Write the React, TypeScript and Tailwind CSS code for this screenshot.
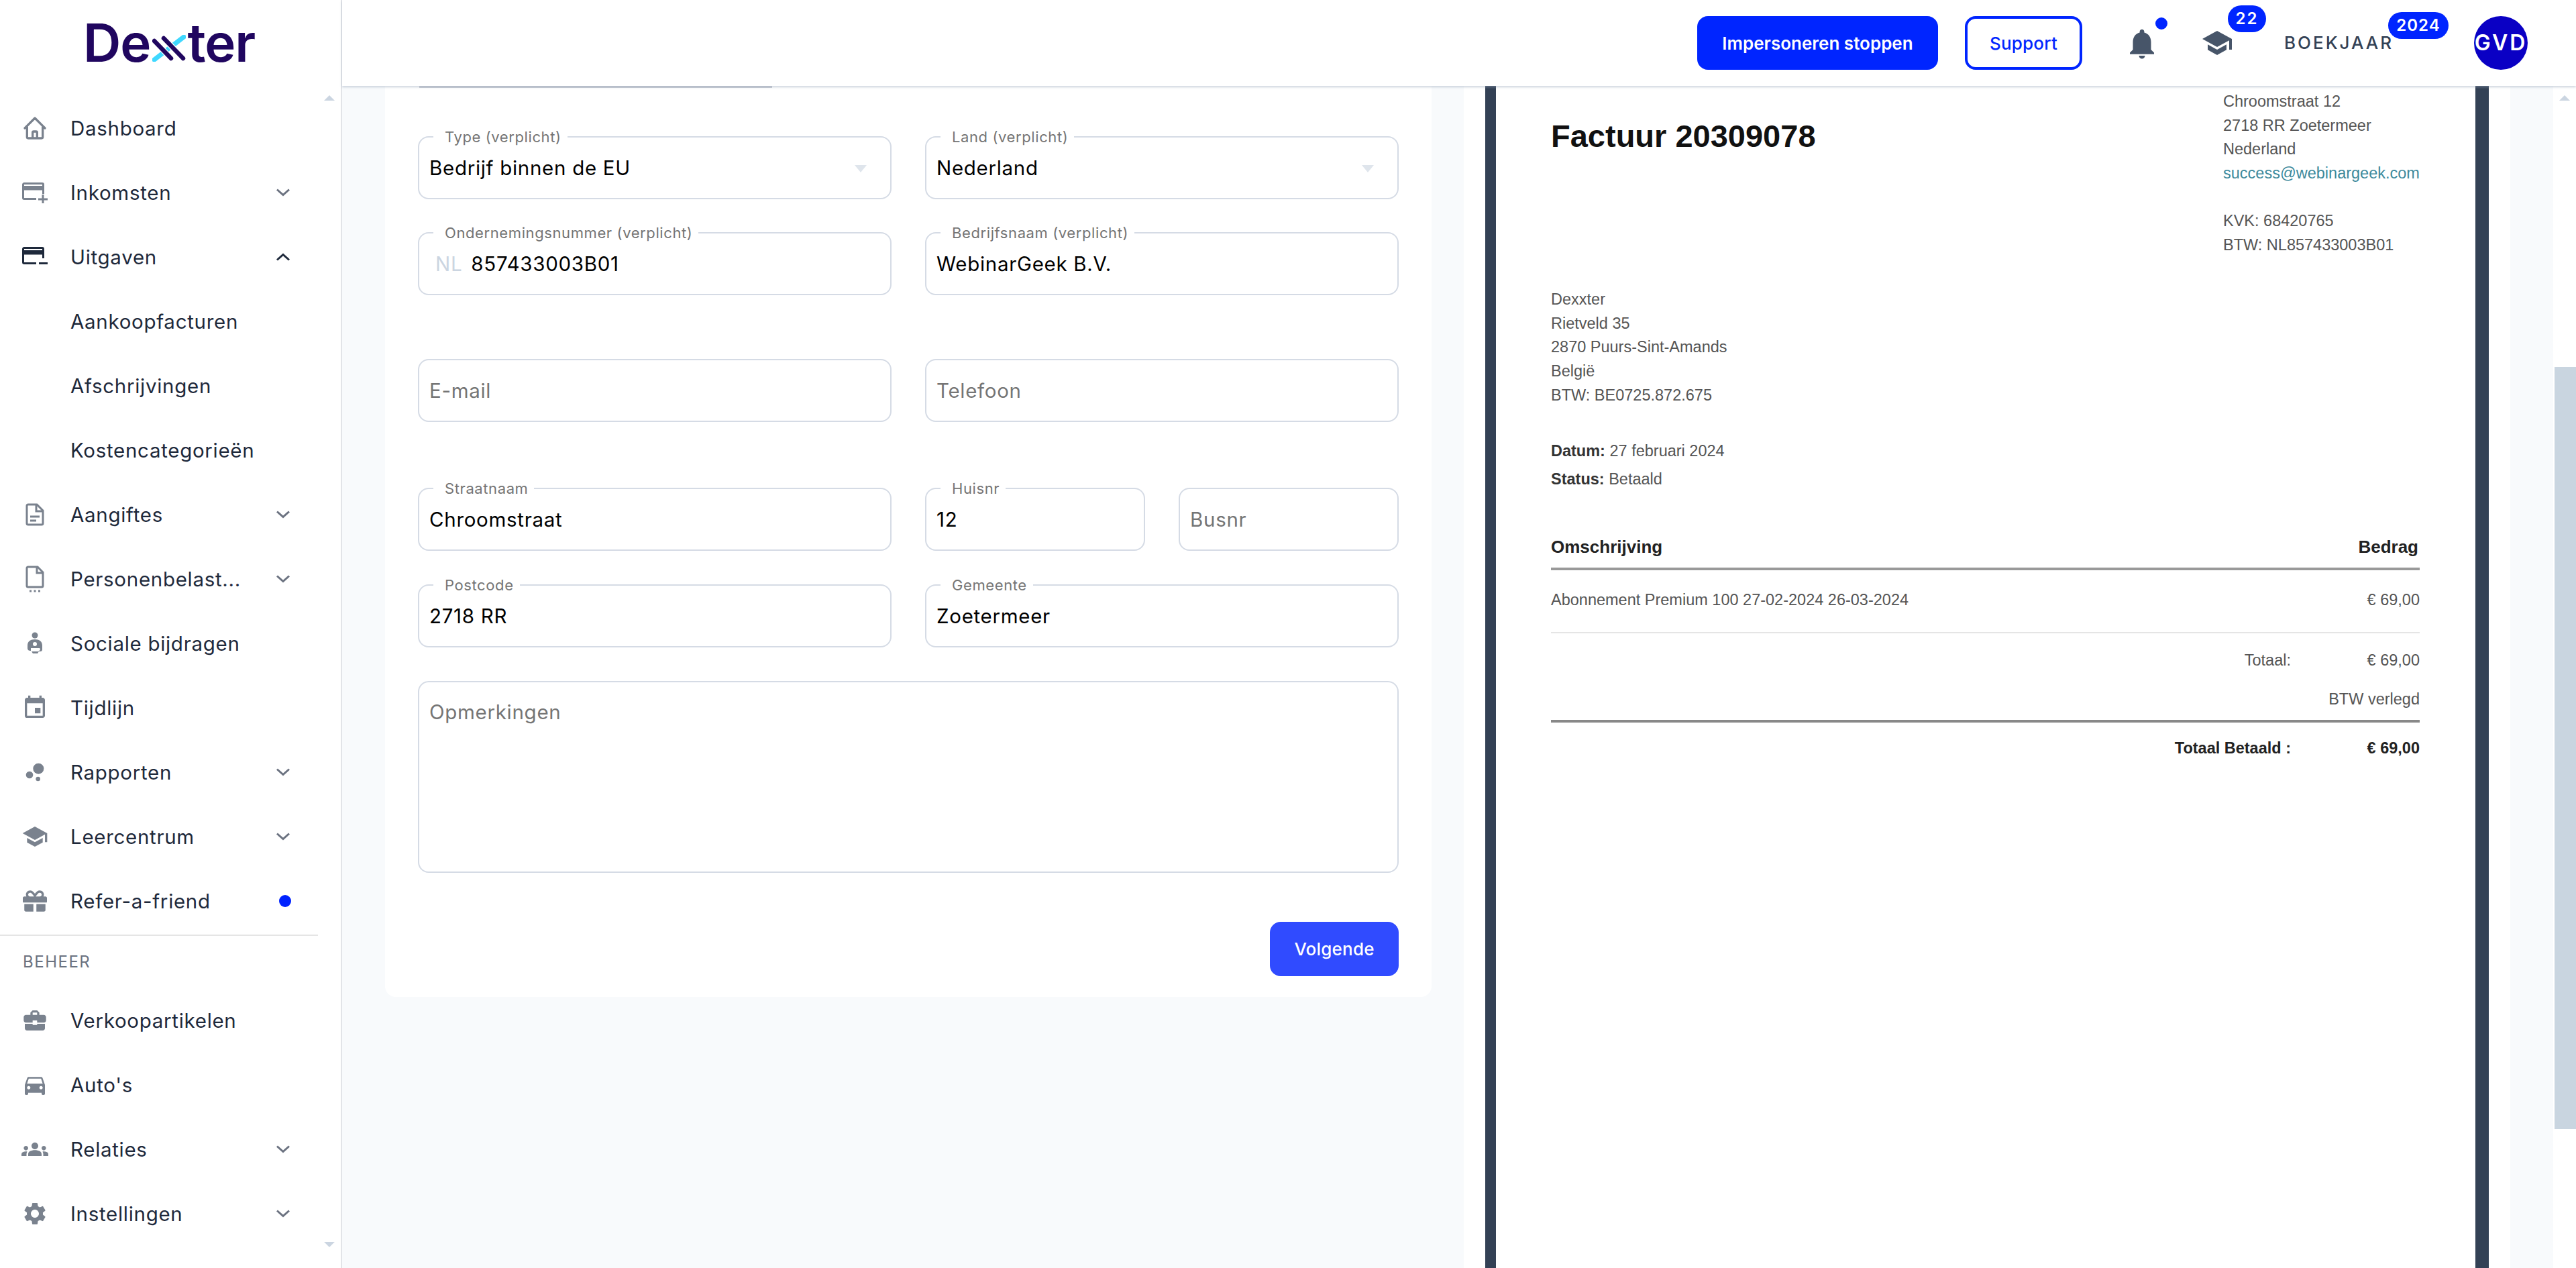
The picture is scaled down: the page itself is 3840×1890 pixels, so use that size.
import React from "react";
import { FaGift } from "react-icons/fa";
import { HiOutlineHome } from "react-icons/hi";
import { MdEvent, MdBubbleChart, MdBusinessCenter, MdDirectionsCar, MdGroups, MdSettings, MdSchool, MdNotifications } from "react-icons/md";

const CardIcon = ({ minus }: { minus?: boolean }) => (
  <svg width="38" height="31" viewBox="0 0 38 31" fill="none" stroke="currentColor">
    <path d="M21 24.500H3A1.500 1.500 0 0 1 1.500 23V3A1.500 1.500 0 0 1 3 1.500h27A1.500 1.500 0 0 1 31.500 3V17" strokeWidth="3" />
    <path d="M1.500 5.500h30v5.500h-30z" fill="currentColor" strokeWidth="1" />
    {minus ? <path d="M25 24.500h13" strokeWidth="3" /> : <path d="M24 25h14M31 18v13" strokeWidth="3" />}
  </svg>
);
const Doc = () => (
  <svg width="28" height="34" viewBox="0 0 28 34" fill="none" stroke="currentColor" strokeWidth="3">
    <path d="M17 2H4a2 2 0 0 0-2 2v26a2 2 0 0 0 2 2h20a2 2 0 0 0 2-2V11z" />
    <path d="M16 2v10h10M7 20h14M7 26h9" />
  </svg>
);
const DocDots = () => (
  <svg width="28" height="40" viewBox="0 0 28 40" fill="none" stroke="currentColor" strokeWidth="3">
    <path d="M18 2H4a2 2 0 0 0-2 2v26a2 2 0 0 0 2 2h20a2 2 0 0 0 2-2V10z" />
    <path d="M17 2v9h9" />
    <path d="M6 38h3M12.500 38h3M19 38h3" />
  </svg>
);
const Person = () => (
  <svg width="24" height="34" viewBox="0 0 24 34" fill="currentColor">
    <circle cx="12" cy="5" r="4.500" />
    <path fillRule="evenodd" d="M12 11c6.500 0 11 3 11 9v6c0 2-1 3-3 3h-3c1.500-1 3-2 3-3.500 0-1-1-1.500-2-1.500H6v4c-3 0-5-1-5-4v-4c0-6 4.500-9 11-9zm0 4a3 3 0 1 0 0 6 3 3 0 0 0 0-6z" />
    <path d="M7 29h11l-2 3H9z" />
  </svg>
);
const Chevron = ({ up }: { up?: boolean }) => (
  <svg width="20" height="12" viewBox="0 0 20 12" fill="none" stroke="currentColor" strokeWidth="3">
    <path d={up ? "M1 10.500l9-8 9 8" : "M1 1.500l9 8 9-8"} />
  </svg>
);

type Item = { label: string; icon?: React.ReactNode; chev?: boolean; up?: boolean; dark?: boolean; dot?: boolean };
const top: Item[] = [
  { label: "Dashboard", icon: <HiOutlineHome size={40} /> },
  { label: "Inkomsten", icon: <CardIcon />, chev: true },
  { label: "Uitgaven", icon: <CardIcon minus />, chev: true, up: true, dark: true },
  { label: "Aankoopfacturen" },
  { label: "Afschrijvingen" },
  { label: "Kostencategorieën" },
  { label: "Aangiftes", icon: <Doc />, chev: true },
  { label: "Personenbelast...", icon: <DocDots />, chev: true },
  { label: "Sociale bijdragen", icon: <Person /> },
  { label: "Tijdlijn", icon: <MdEvent size={40} /> },
  { label: "Rapporten", icon: <MdBubbleChart size={40} />, chev: true },
  { label: "Leercentrum", icon: <MdSchool size={40} />, chev: true },
  { label: "Refer-a-friend", icon: <FaGift size={36} />, dot: true },
];
const bottom: Item[] = [
  { label: "Verkoopartikelen", icon: <MdBusinessCenter size={40} /> },
  { label: "Auto's", icon: <MdDirectionsCar size={40} /> },
  { label: "Relaties", icon: <MdGroups size={40} />, chev: true },
  { label: "Instellingen", icon: <MdSettings size={40} />, chev: true },
];

const NavRow = ({ item }: { item: Item }) => (
  <div className="flex h-[96px] items-center pr-[76px]">
    <div className={`ml-[32px] flex w-[40px] justify-center ${item.dark ? "text-[#1e293b]" : "text-[#7a828e]"}`}>{item.icon}</div>
    <span className="ml-[33px] text-[29.5px] tracking-[0.7px] text-[#1e293b]">{item.label}</span>
    {item.chev && (
      <span className={`ml-auto ${item.dark ? "text-[#1e293b]" : "text-[#6b7280]"}`}>
        <Chevron up={item.up} />
      </span>
    )}
    {item.dot && <span className="ml-auto -mr-[2px] h-[18px] w-[18px] rounded-full bg-[#0022ff]" />}
  </div>
);

const Field = ({
  label,
  value,
  placeholder,
  className = "",
  prefix,
  select,
}: {
  label?: string;
  value?: string;
  placeholder?: string;
  className?: string;
  prefix?: string;
  select?: boolean;
}) => (
  <div className={`relative flex h-[94px] items-center rounded-[16px] border-2 border-[#d5dbe5] px-[15px] text-[29.5px] tracking-[0.7px] ${className}`}>
    {label && (
      <span className="absolute -top-[14px] left-[21px] bg-white pl-[17px] pr-[9px] text-[22px] leading-[26px] tracking-[0.6px] text-[#757575]">
        {label}
      </span>
    )}
    {prefix && <span className="ml-[9px] mr-[13px] text-[#cbd5e1]">{prefix}</span>}
    {value && <span className="text-black">{value}</span>}
    {placeholder && <span className="text-[#757575]">{placeholder}</span>}
    {select && <span className="ml-auto mr-[20px] mt-[2px] h-0 w-0 border-x-[9px] border-t-[11px] border-x-transparent border-t-[#dfe5ec]" />}
  </div>
);

const Small = ({ children, className = "" }: { children: React.ReactNode; className?: string }) => (
  <div className={`h-[35.6px] leading-[35.6px] ${className}`}>{children}</div>
);

const Total = ({ label, amount, className = "" }: { label: string; amount: string; className?: string }) => (
  <div className={`flex justify-end ${className}`}>
    <Small>{label}</Small>
    <Small className="w-[192px] text-right">{amount}</Small>
  </div>
);

export default function App() {
  return (
    <div className="flex h-[1890px] w-[3840px] overflow-hidden bg-[#f8fafc] font-['Inter',sans-serif]">
      <aside className="relative h-full w-[510px] shrink-0 border-r-2 border-[#e2e4e8] bg-white">
        <div className="flex h-[128px] items-center pl-[124px] text-[#20065f]">
          <div className="flex items-baseline">
            <span className="text-[78px] font-semibold leading-none tracking-[-1px]">De</span>
            <svg width="50" height="40" viewBox="0 0 50 40" className="ml-[3px] mr-[2px]">
              <path d="M3 37L47 3" stroke="#3fd8ff" strokeWidth="7" strokeLinecap="round" />
              <path d="M3 9l25 26M17 5l29 30" stroke="#fff" strokeWidth="9" strokeLinecap="round" />
              <path d="M3 9l25 26M17 5l29 30" stroke="#20065f" strokeWidth="6.500" strokeLinecap="round" />
            </svg>
            <span className="text-[78px] font-semibold leading-none tracking-[-1px]">ter</span>
          </div>
        </div>
        <div className="pt-[15px]">
          {top.map((i) => (
            <NavRow key={i.label} item={i} />
          ))}
        </div>
        <div className="mt-[2px] h-[2px] w-[474px] bg-[#e5e5e5]" />
        <div className="flex h-[78px] items-center pl-[34px] text-[24px] tracking-[1.5px] text-[#6b7280]">BEHEER</div>
        {bottom.map((i) => (
          <NavRow key={i.label} item={i} />
        ))}
        <span className="absolute left-[483px] top-[142px] h-0 w-0 border-x-[8px] border-b-[8px] border-x-transparent border-b-[#cbd5e1]" />
        <span className="absolute left-[483px] top-[1851px] h-0 w-0 border-x-[8px] border-t-[8px] border-x-transparent border-t-[#cbd5e1]" />
      </aside>

      <div className="flex min-w-0 flex-1 flex-col">
        <header className="z-10 flex h-[128px] shrink-0 items-start bg-white pt-[24px] shadow-[0_2px_3px_rgba(148,163,184,0.45)]">
          <button className="ml-[2020px] flex h-[80px] w-[359px] items-center justify-center rounded-[16px] bg-[#0025ff] text-[26px] font-semibold text-white">
            Impersoneren stoppen
          </button>
          <button className="ml-[40px] flex h-[80px] w-[175px] items-center justify-center rounded-[16px] border-[4px] border-[#0025ff] text-[26px] font-medium tracking-[0.2px] text-[#0025ff]">
            Support
          </button>
          <div className="relative ml-[62px] mt-[14px] text-[#475569]">
            <MdNotifications size={54} />
            <span className="absolute left-[47px] -top-[12px] h-[18px] w-[18px] rounded-full bg-[#0025ff]" />
          </div>
          <div className="relative ml-[61px] mt-[16px] text-[#475569]">
            <MdSchool size={48} />
            <span className="absolute -top-[32px] left-[40px] flex h-[40px] w-[57px] items-center justify-center rounded-full bg-[#0025ff] text-[24px] font-semibold tracking-[2px] text-white">22</span>
          </div>
          <div className="relative ml-[76px] mt-[20px] w-[161px] whitespace-nowrap text-[26px] font-medium tracking-[3px] text-[#334155]">
            BOEKJAAR
            <span className="absolute -top-[26px] left-[155px] flex h-[40px] w-[90px] items-center justify-center rounded-full bg-[#0025ff] text-[24px] font-semibold tracking-[1px] text-white">2024</span>
          </div>
          <div className="ml-[122px] flex h-[80px] w-[80px] items-center justify-center overflow-hidden rounded-full bg-[#0a00c4] text-[32px] font-semibold tracking-[3px] text-white">GVD</div>
        </header>

        <div className="flex min-h-0 flex-1">
          <div className="w-[1672px] shrink-0 pl-[64px]">
            <form className="flex h-[1358px] w-[1560px] flex-col rounded-b-[16px] bg-white px-[49px]">
              <div className="ml-[2px] h-[3px] w-[526px] bg-[#c8ccd4]" />
              <div className="mt-[72px] grid grid-cols-2 gap-[50px]">
                <Field label="Type (verplicht)" value="Bedrijf binnen de EU" select />
                <Field label="Land (verplicht)" value="Nederland" select />
              </div>
              <div className="mt-[49px] grid grid-cols-2 gap-[50px]">
                <Field label="Ondernemingsnummer (verplicht)" value="857433003B01" prefix="NL" />
                <Field label="Bedrijfsnaam (verplicht)" value="WebinarGeek B.V." />
              </div>
              <div className="mt-[95px] grid grid-cols-2 gap-[50px]">
                <Field placeholder="E-mail" />
                <Field placeholder="Telefoon" />
              </div>
              <div className="mt-[98px] grid grid-cols-4 gap-[50px]">
                <Field label="Straatnaam" value="Chroomstraat" className="col-span-2" />
                <Field label="Huisnr" value="12" />
                <Field placeholder="Busnr" />
              </div>
              <div className="mt-[50px] grid grid-cols-2 gap-[50px]">
                <Field label="Postcode" value="2718 RR" />
                <Field label="Gemeente" value="Zoetermeer" />
              </div>
              <div className="mt-[50px] h-[286px] rounded-[16px] border-2 border-[#d5dbe5] px-[15px] pt-[26px] text-[29.5px] leading-[36px] tracking-[0.7px] text-[#757575]">
                Opmerkingen
              </div>
              <button className="ml-auto mt-[73px] flex h-[81px] w-[192px] items-center justify-center rounded-[16px] bg-[#304bff] text-[26px] font-medium tracking-[0.2px] text-white">
                Volgende
              </button>
            </form>
          </div>
          <div className="flex w-[1560px] shrink-0 bg-white px-[32px]">
            <div className="h-full w-[1496px] border-l-[16px] border-r-[20px] border-[#334155] bg-white pl-[82px] pr-[83px] font-['Liberation_Sans',sans-serif] text-[23.5px] text-[#555]">
              <div className="flex justify-between">
                <h1 className="mt-[48px] text-[47px] font-bold leading-[54px] text-[#111]">Factuur 20309078</h1>
                <div className="mt-[6px] w-[293px]">
                  <Small>Chroomstraat 12</Small>
                  <Small>2718 RR Zoetermeer</Small>
                  <Small>Nederland</Small>
                  <Small className="text-[#3d8a9c]">success@webinargeek.com</Small>
                  <Small className="mt-[35.6px]">KVK: 68420765</Small>
                  <Small>BTW: NL857433003B01</Small>
                </div>
              </div>
              <div className="mt-[46px]">
                <Small>Dexxter</Small>
                <Small>Rietveld 35</Small>
                <Small>2870 Puurs-Sint-Amands</Small>
                <Small>België</Small>
                <Small>BTW: BE0725.872.675</Small>
              </div>
              <Small className="mt-[48px]"><b className="text-[#333]">Datum:</b> 27 februari 2024</Small>
              <Small className="mt-[6px]"><b className="text-[#333]">Status:</b> Betaald</Small>
              <div className="mt-[52px] flex h-[66px] items-center justify-between border-b-4 border-[#999] text-[26px] font-bold text-[#222]">
                <span>Omschrijving</span>
                <span className="mr-[2px]">Bedrag</span>
              </div>
              <div className="flex h-[94px] items-center justify-between border-b-2 border-[#e5e5e5] pb-[4px]">
                <span>Abonnement Premium 100 27-02-2024 26-03-2024</span>
                <span>€ 69,00</span>
              </div>
              <Total className="mt-[23px]" label="Totaal:" amount="€ 69,00" />
              <Small className="mt-[22px] text-right">BTW verlegd</Small>
              <div className="mt-[12px] h-[4px] bg-[#888]" />
              <Total className="mt-[21px] font-bold text-[#222]" label="Totaal Betaald :" amount="€ 69,00" />
            </div>
          </div>
          <div className="w-[64px] shrink-0" />
          <div className="relative flex-1 bg-white">
            <span className="absolute left-[9px] top-[14px] h-0 w-0 border-x-[8px] border-b-[8px] border-x-transparent border-b-[#cbd5e1]" />
            <div className="absolute bottom-[207px] left-[2px] right-0 top-[419px] bg-[#c9d5e0]" />
          </div>
        </div>
      </div>
    </div>
  );
}
